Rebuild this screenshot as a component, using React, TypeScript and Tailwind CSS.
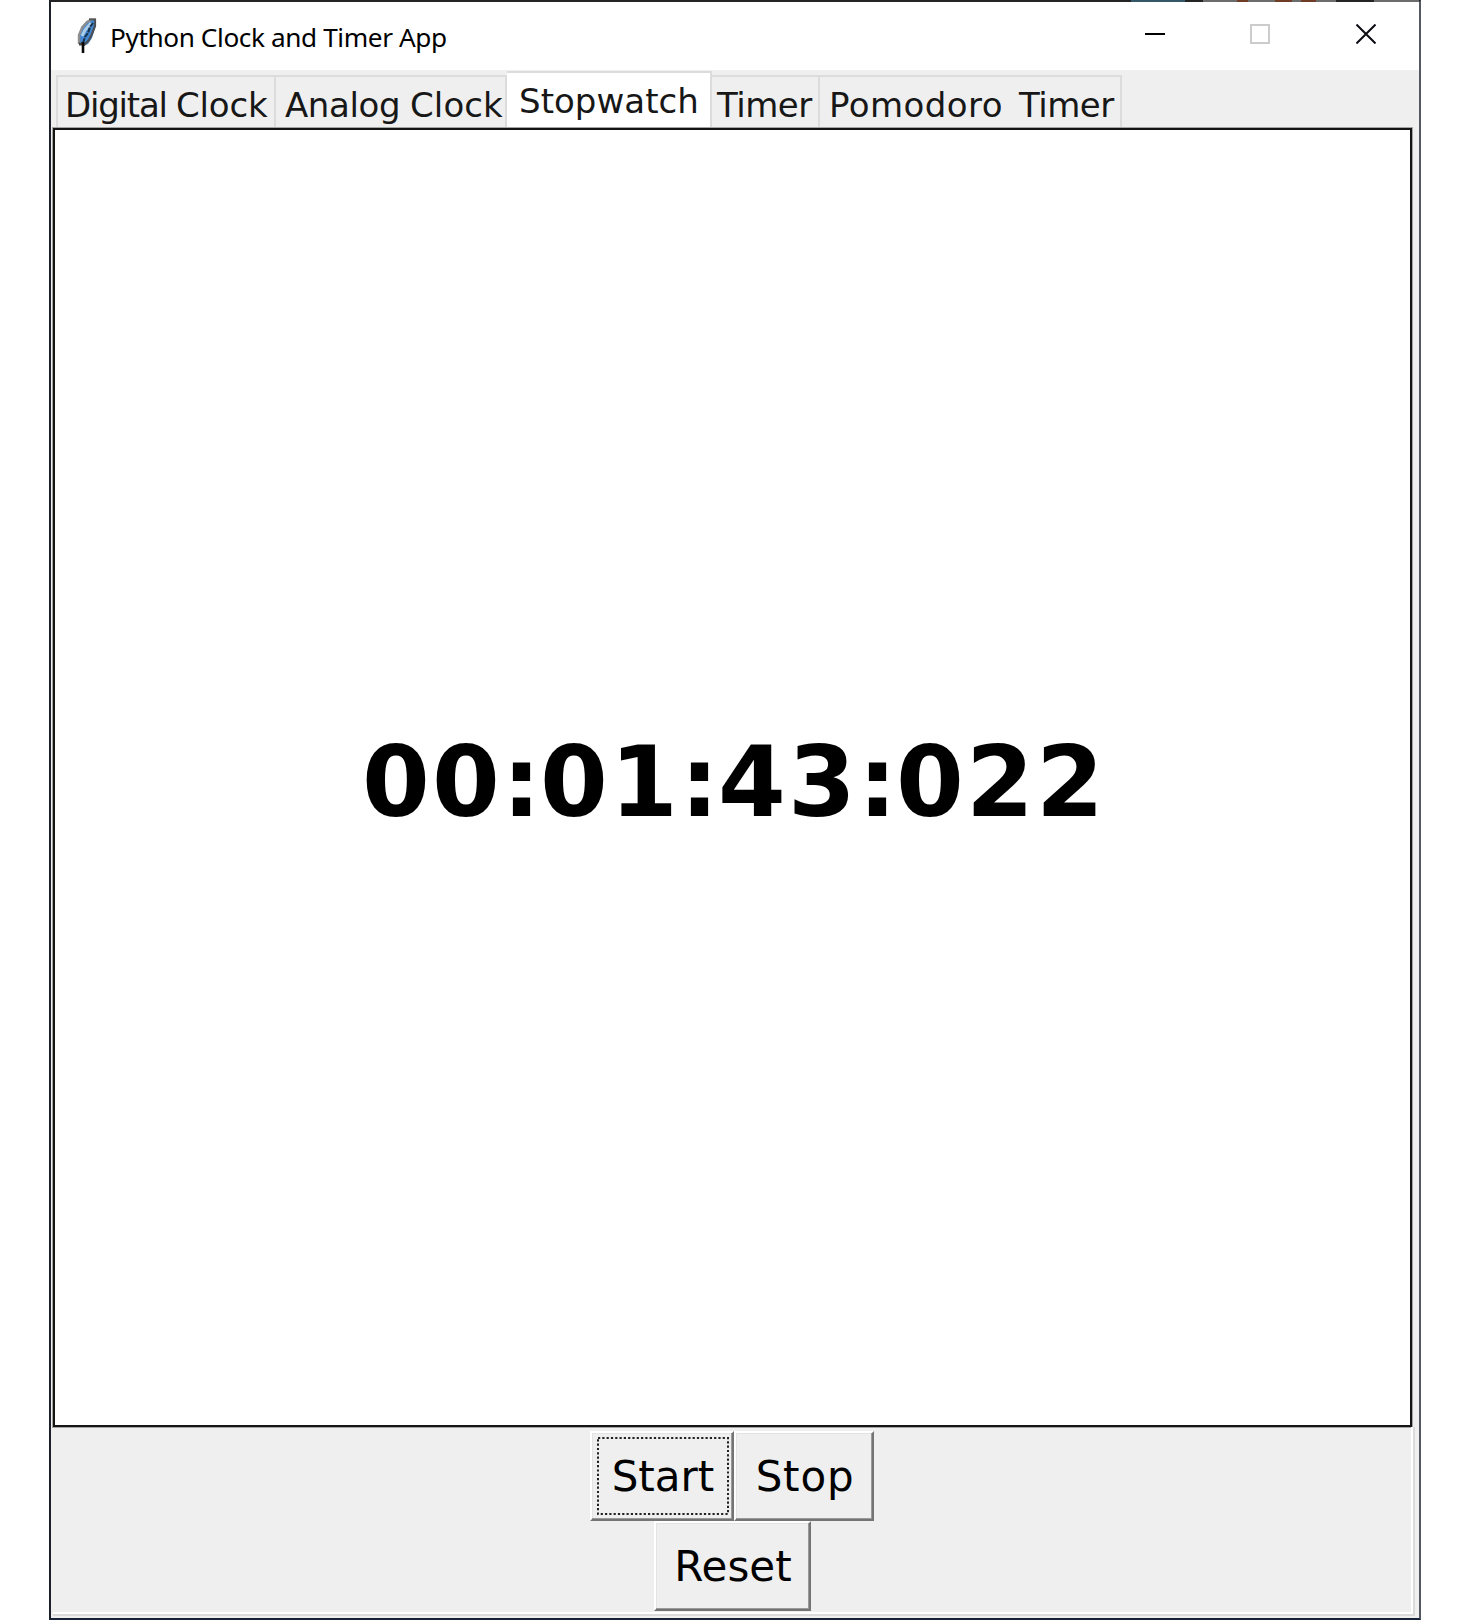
import { useState } from "react";

const tabs = [
  { words: [{ text: "Digital", cls: "w-[111px] tracking-[-1.2px]" }, { text: "Clock", cls: "tracking-[-0.2px]" }], cls: "w-[220px] pl-[7px]" },
  { words: [{ text: "Analog", cls: "w-[125px] tracking-[-0.4px]" }, { text: "Clock", cls: "tracking-[0.1px]" }], cls: "w-[231px] pl-[9px]" },
  { words: [{ text: "Stopwatch", cls: "tracking-[0.05px]" }], cls: "w-[205px] pl-[12px]" },
  { words: [{ text: "Timer", cls: "tracking-[-0.5px]" }], cls: "w-[108px] pl-[5px]" },
  { words: [{ text: "Pomodoro", cls: "w-[190px] tracking-[0.45px]" }, { text: "Timer", cls: "tracking-[-0.5px]" }], cls: "w-[302px] pl-[9px]" },
];

function Feather() {
  return (
    <svg className="ml-[26px] h-[36px] w-[20px] shrink-0" viewBox="0 0 20 36" fill="none">
      <path d="M6 34V26L2 24V15L4 12V9L9 4L13 1H19V7L17 13L15 20L11 26L6 28" fill="#4387d2" />
      <path d="M2 26V17L5 10L10 4L14 2" stroke="#8e8e8e" strokeWidth="2.4" />
      <path d="M5 18L8 12L14 5" stroke="#a9cce9" strokeWidth="3" />
      <path d="M6 25L8 19L11 15L13 9L16 5" stroke="#173047" strokeWidth="2" strokeDasharray="5 1" />
      <path d="M18 1V8L15 16L12 22L7 27" stroke="#4b5056" strokeWidth="2.2" />
      <path d="M2 26H8" stroke="#444" strokeWidth="3" />
      <path d="M6 24V35" stroke="#080808" strokeWidth="2.6" />
      <path d="M12 1.3H19" stroke="#555" strokeWidth="2" />
    </svg>
  );
}

function PushButton({ label, className, focused }: { label: string; className: string; focused?: boolean }) {
  return (
    <button
      className={`relative flex h-[90px] items-center justify-center border-2 border-t-white border-l-white border-r-[#747474] border-b-[#747474] bg-[#efefef] pt-[2px] pl-[2px] text-[42px] leading-none text-black shadow-[inset_-1px_-1px_0_#9a9a9a,inset_1px_1px_0_#e3e3e3] ${className}`}
    >
      {focused && (
        <svg className="absolute top-[4px] left-[5px] h-[79px] w-[133px]" fill="none">
          <rect x="1" y="1" width="130" height="76" stroke="#222" strokeWidth="2" strokeDasharray="2.2 2.1" />
        </svg>
      )}
      {label}
    </button>
  );
}

export default function App() {
  const [active, setActive] = useState(2);
  return (
    <div className="flex h-[1620px] w-[1470px] bg-white pl-[49px] font-['DejaVu_Sans',sans-serif]">
      <div className="flex h-full w-[1372px] flex-col border-2 border-t-[#242424] border-r-[#555961] border-b-[#172238] border-l-[#1b2029] bg-[#efefef]">
        <header className="relative flex h-[68px] shrink-0 items-center bg-white">
          <div className="absolute -top-[2px] right-0 flex h-[2px] w-[288px] bg-[#6c6c6c]">
            <i className="w-[54px] bg-[#34576a]" />
            <i className="w-[18px] bg-[#242424]" />
            <i className="ml-[34px] w-[11px] bg-[#713c24]" />
            <i className="ml-[27px] w-[17px] bg-[#713c24]" />
            <i className="ml-[9px] w-[15px] bg-[#713c24]" />
            <i className="ml-[20px] w-[38px] bg-[#242424]" />
          </div>
          <Feather />
          <h1 className="ml-[13px] w-[345px] pt-[1px] font-['Noto_Sans',sans-serif] text-[26.2px] leading-[36px] font-normal tracking-[-0.4px] whitespace-nowrap text-black">
            Python Clock and Timer App
          </h1>
          <div className="ml-auto flex items-center gap-[85px] pr-[43px] pb-[4px]">
            <svg className="h-[20px] w-[20px]" viewBox="0 0 20 20"><path d="M0 10H20" stroke="#000" strokeWidth="2" /></svg>
            <svg className="h-[20px] w-[20px]" viewBox="0 0 20 20" fill="none"><rect x="1" y="1" width="18" height="18" stroke="#ccc" strokeWidth="2" /></svg>
            <svg className="ml-[1px] h-[20px] w-[20px]" viewBox="0 0 20 20"><path d="M.5 .5L19.5 19.5M19.5 .5L.5 19.5" stroke="#0b0b12" strokeWidth="2" /></svg>
          </div>
        </header>
        <nav className="flex h-[58px] shrink-0 items-end pl-[5px]">
          {tabs.map(({ words, cls }, i) => (
            <button
              key={i}
              onClick={() => setActive(i)}
              className={`flex shrink-0 border-t-2 border-r-2 border-[#dcdcdc] text-left text-[34px] leading-[40px] whitespace-nowrap text-[#171717] first:border-l-2 ${
                active === i ? "h-[57px] bg-white pt-[8px]" : "h-[53px] bg-[#efefef] pt-[8px]"
              } ${cls}`}
            >
              {words.map((w, k) => (
                <span key={k} className={`inline-block shrink-0 ${w.cls}`}>
                  {w.text}{k < words.length - 1 ? " " : ""}
                </span>
              ))}
            </button>
          ))}
        </nav>
        <main className="flex min-h-0 flex-1 flex-col pr-[4px] pl-[2px]">
          <section className="flex h-[1299px] w-[1359px] shrink-0 items-center justify-center border-2 border-[#141414] bg-white pt-[10px] pl-[3px] outline outline-[#a3a5a3]">
            <time className="text-[97.5px] leading-none font-bold whitespace-nowrap text-black">
              {"00:01:43:022".split("").map((c, i) => (
                <span key={i} className={c === ":" ? "tracking-[-1px]" : "tracking-[2.15px]"}>{c}</span>
              ))}
            </time>
          </section>
          <div className="flex w-[1362px] flex-1 flex-col items-center border-r-2 border-b-2 border-[#dadada] pt-[4px] pr-[2px] shadow-[inset_-2px_-2px_0_white]">
            <div className="flex">
              <PushButton label="Start" focused className="w-[144px]" />
              <PushButton label="Stop" className="w-[140px] tracking-[0.8px]" />
            </div>
            <PushButton label="Reset" className="w-[157px]" />
          </div>
          <div className="h-[2px] shrink-0" />
        </main>
      </div>
    </div>
  );
}
